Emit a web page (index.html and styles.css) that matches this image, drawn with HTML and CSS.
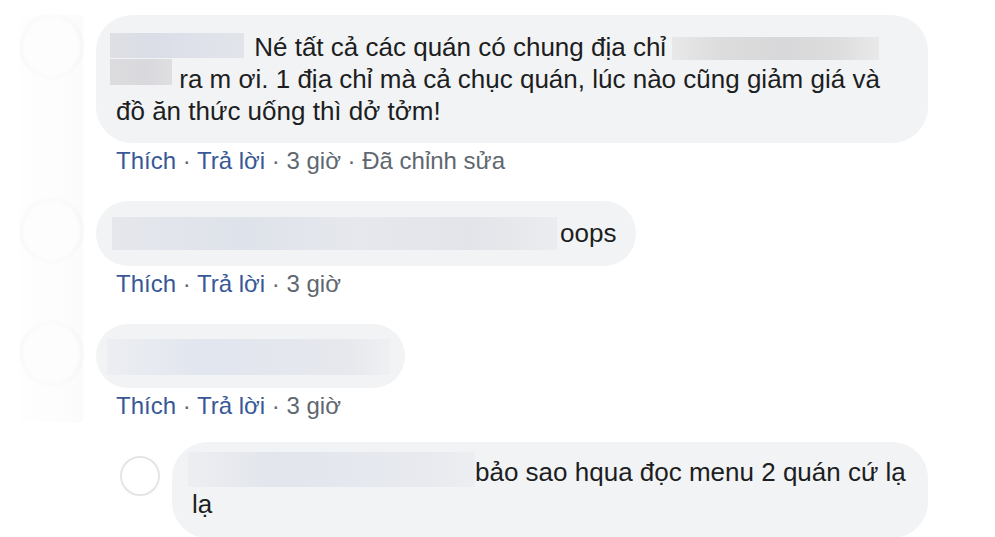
FILE: index.html
```html
<!DOCTYPE html>
<html lang="vi">
<head>
<meta charset="utf-8">
<title>Bình luận</title>
<link rel="stylesheet" href="styles.css">
</head>
<body>
<div class="thread">
  <div class="comment">
    <div class="avatar-col"><div class="avatar"></div></div>
    <div class="body">
      <div class="bubble wide">
        <span class="blur name1"></span> Né tất cả các quán có chung địa chỉ <span class="blur addr"></span><br><span class="blur name2"></span> ra m ơi. 1 địa chỉ mà cả chục quán, lúc nào cũng giảm giá và<br>đồ ăn thức uống thì dở tởm!
      </div>
      <div class="meta"><span class="link">Thích</span> · <span class="link">Trả lời</span> · 3 giờ · Đã chỉnh sửa</div>
    </div>
  </div>

  <div class="comment">
    <div class="avatar-col"><div class="avatar"></div></div>
    <div class="body">
      <div class="bubble"><span class="blur name3"></span>oops</div>
      <div class="meta"><span class="link">Thích</span> · <span class="link">Trả lời</span> · 3 giờ</div>
    </div>
  </div>

  <div class="comment last">
    <div class="avatar-col"><div class="avatar"></div></div>
    <div class="body">
      <div class="bubble tight"><span class="blur name4"></span></div>
      <div class="meta"><span class="link">Thích</span> · <span class="link">Trả lời</span> · 3 giờ</div>
    </div>
  </div>

  <div class="reply">
    <div class="avatar-sm"></div>
    <div class="bubble reply-bubble"><span class="blur name5"></span>bảo sao hqua đọc menu 2 quán cứ lạ<br>lạ</div>
  </div>
</div>
</body>
</html>
```

FILE: styles.css
```css
html, body {
  margin: 0;
  padding: 0;
  background: #ffffff;
}
body {
  font-family: "Liberation Sans", Arial, sans-serif;
  color: #1c1e21;
  width: 995px;
  height: 537px;
  overflow: hidden;
}
.thread {
  padding: 15px 0 0 20px;
}
.comment {
  display: flex;
  gap: 13px;
  padding-bottom: 24px;
}
.comment.last {
  padding-bottom: 20px;
}
.avatar-col {
  width: 63px;
  flex: none;
  background: linear-gradient(90deg, #fefefe, #fdfdfd 60%, #fbfbfb);
  margin-bottom: -24px;
}
.comment.last .avatar-col {
  margin-bottom: 0;
}
.avatar {
  width: 63px;
  height: 63px;
  border-radius: 50%;
  background: #fdfdfd;
  box-shadow: inset 2px 0 2px rgba(0,0,0,0.04), inset -2px 0 2px rgba(0,0,0,0.05);
  filter: blur(1.5px);
}
.comment:nth-child(2) .avatar,
.comment:nth-child(3) .avatar {
  margin-top: -2px;
}
.body {
  display: flex;
  flex-direction: column;
  align-items: flex-start;
}
.bubble {
  background: #f2f3f5;
  border-radius: 32px;
  padding: 16px 20px;
  font-size: 26px;
  line-height: 32px;
  white-space: nowrap;
}
.bubble.wide {
  width: 832px;
  box-sizing: border-box;
  border-radius: 36px;
}
.bubble.tight {
  padding-right: 15px;
}
.reply-bubble {
  width: 756px;
  box-sizing: border-box;
  border-radius: 36px;
  padding-top: 14px;
  padding-bottom: 18px;
}
.blur {
  display: inline-block;
  vertical-align: top;
}
.name1 {
  width: 134px;
  height: 25px;
  margin: 2px 3px 0 -6px;
  background: linear-gradient(90deg, #dfe0e4 0%, #dadde6 30%, #dee1ea 60%, #e2e4ea 100%);
}
.addr {
  width: 207px;
  height: 23px;
  margin: 6px 0 0 -1px;
  background: linear-gradient(90deg, #e8e8e8 0%, #dcdcdc 25%, #d8d8da 55%, #dddddd 80%, #e9e9e9 100%);
}
.name2 {
  width: 62px;
  height: 26px;
  margin: -4px 0 0 -6px;
  background: linear-gradient(90deg, #dcdcdf, #d9d9dd 60%, #dfdfe2);
}
.name3 {
  width: 445px;
  height: 33px;
  margin: 0 3px 0 -4px;
  background: linear-gradient(90deg, #e5e7ec 0%, #dee2ea 30%, #e6e8ed 55%, #e2e4e9 80%, #ebecef 100%);
}
.name4 {
  width: 283px;
  height: 36px;
  margin: -1px 0 -3px -9px;
  background: linear-gradient(90deg, #eceef2 0%, #e1e5ee 35%, #e4e7ee 60%, #e6e8ed 85%, #eef0f2 100%);
}
.name5 {
  width: 287px;
  height: 35px;
  margin: -4px 0 0 -4px;
  background: linear-gradient(90deg, #eceef1 0%, #e2e5ec 30%, #e5e8ee 60%, #e8eaef 85%, #eceef1 100%);
}
.meta {
  padding-left: 20px;
  margin-top: 2px;
  font-size: 24px;
  line-height: 32px;
  color: #606770;
  white-space: nowrap;
}
.link {
  color: #385898;
}
.reply {
  display: flex;
  align-items: flex-start;
  gap: 12px;
  padding-left: 100px;
}
.avatar-sm {
  flex: none;
  width: 40px;
  height: 40px;
  box-sizing: border-box;
  border-radius: 50%;
  border: 2px solid #e4e5e7;
  background: #ffffff;
  margin-top: 14px;
}
```
